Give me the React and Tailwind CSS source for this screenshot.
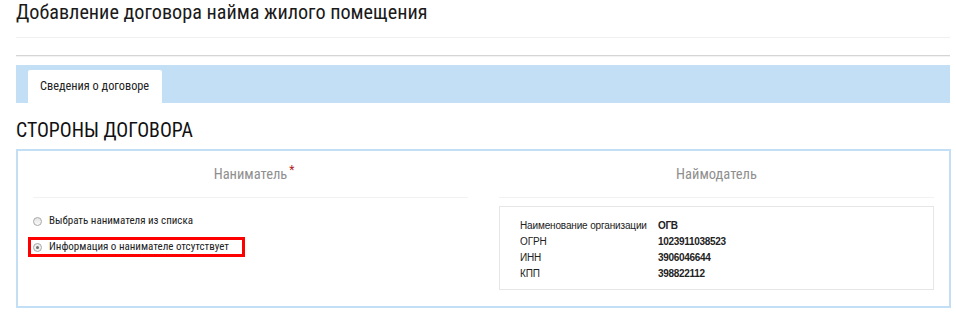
export default function App() {
  const rows = [
    ["Наименование организации", "ОГВ"],
    ["ОГРН", "1023911038523"],
    ["ИНН", "3906046644"],
    ["КПП", "398822112"],
  ];
  return (
    <div className="w-[956px] h-[315px] bg-white overflow-hidden pl-4 pr-[6px] font-['Roboto',sans-serif]">
      <div className="h-[38px] border-b border-[#f0f0f0]">
        <h1 className="text-[20.2px] leading-[24px] text-[#1a1a1a] font-normal font-stretch-condensed whitespace-nowrap">
          Добавление договора найма жилого помещения
        </h1>
      </div>
      <div className="h-[17px]" />
      <div className="border-b border-[#d5d5d5]" />
      <div className="h-[9px] border-t border-[#f3f3f3]" />
      <div className="h-[38px] bg-[#c2dff5] pt-[5px] pl-3 flex">
        <div className="h-[33px] w-[134px] bg-white rounded-t-[2px] px-3 flex items-center text-[12.3px] text-[#222] font-stretch-condensed whitespace-nowrap">
          Сведения о договоре
        </div>
      </div>
      <div className="h-[46px] flex items-end pb-[7px]">
        <h2 className="text-[19.8px] leading-[22px] uppercase text-[#111] font-stretch-condensed whitespace-nowrap">
          Стороны договора
        </h2>
      </div>
      <div className="w-[935px] h-[159px] border-2 border-[#c2dff5] px-[15px] grid grid-cols-2 gap-x-[31px]">
        <div className="flex flex-col">
          <div className="h-[47px] border-b border-[#f2f2f2] flex items-center justify-center pt-[2px]">
            <span className="text-[14.5px] text-[#8f8f8f] font-stretch-condensed relative">
              Наниматель
              <span className="absolute -right-[7px] -top-[3px] text-[12px] text-[#b22222]">*</span>
            </span>
          </div>
          <div className="pt-[14px] flex flex-col gap-[8px] text-[11px] text-[#222] font-stretch-condensed">
            <label className="flex items-center h-[18px] whitespace-nowrap">
              <span className="w-[9px] h-[9px] rounded-full border border-[#a8a8a8] bg-gradient-to-b from-[#e4e4e4] to-[#fafafa] mr-[7px] shrink-0" />
              Выбрать нанимателя из списка
            </label>
            <label className="relative flex items-center h-[18px] whitespace-nowrap">
              <span className="w-[9px] h-[9px] rounded-full border border-[#a8a8a8] bg-[#f0f0f0] mr-[7px] flex items-center justify-center shrink-0">
                <span className="w-[3px] h-[3px] rounded-full bg-[#6e6e6e]" />
              </span>
              Информация о нанимателе отсутствует
              <span className="absolute left-[-5px] top-[-1px] w-[217px] h-[20px] border-[3px] border-[#ff0000]" />
            </label>
          </div>
        </div>
        <div className="flex flex-col">
          <div className="h-[47px] border-b border-[#f2f2f2] flex items-center justify-center pt-[2px]">
            <span className="text-[14.5px] text-[#8f8f8f] font-stretch-condensed">Наймодатель</span>
          </div>
          <div className="mt-[8px] h-[84px] border border-[#e6e6e6] pl-[20px] pt-[10px] font-['Liberation_Sans',Arial,sans-serif] text-[10px] text-[#222]">
            {rows.map(([k, v]) => (
              <div key={k} className="flex h-[16px] items-center whitespace-nowrap">
                <span className="w-[138px] tracking-[-0.15px]">{k}</span>
                <span className="font-bold tracking-[-0.3px]">{v}</span>
              </div>
            ))}
          </div>
        </div>
      </div>
    </div>
  );
}
